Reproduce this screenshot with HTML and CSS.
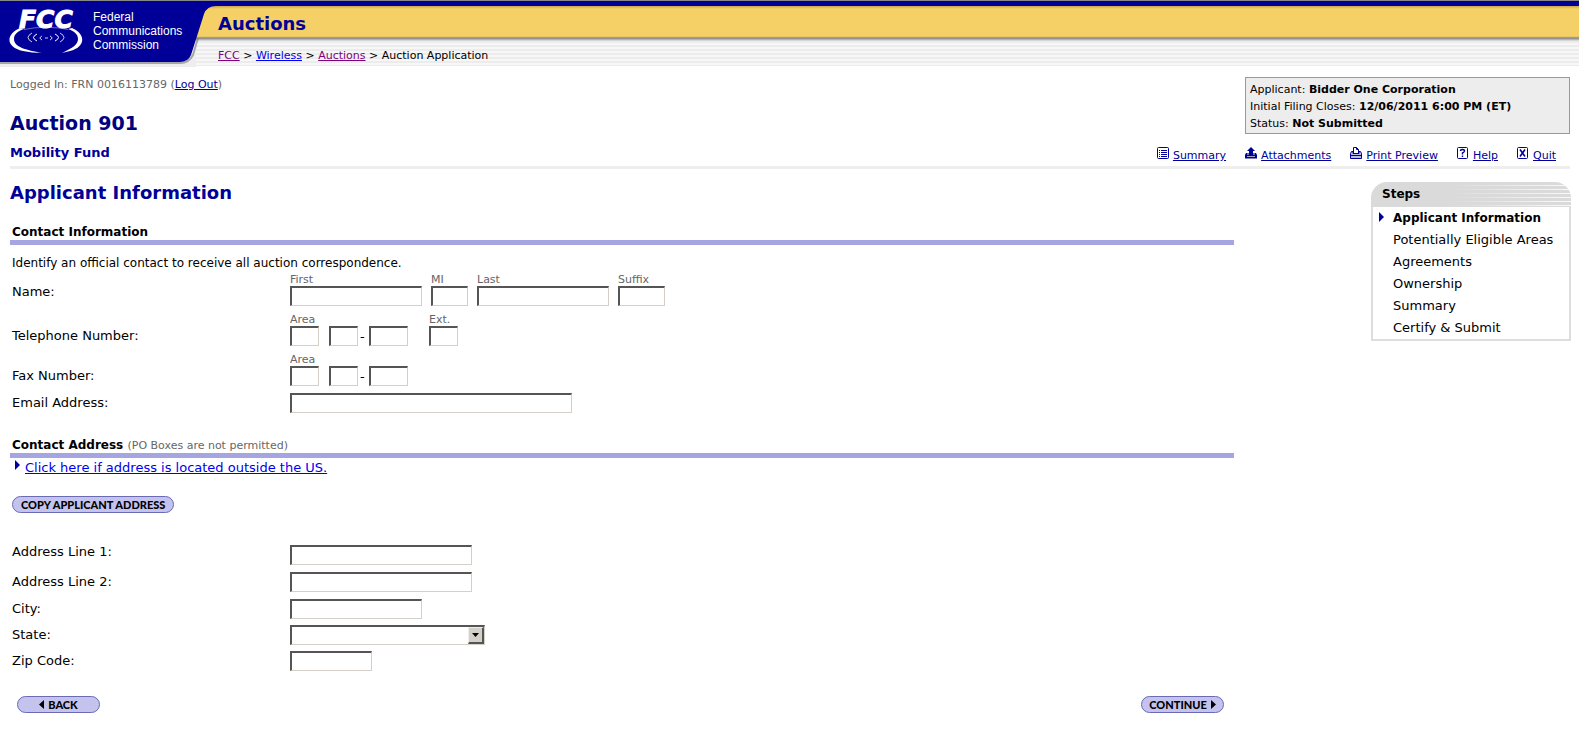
FILE: index.html
```html
<!DOCTYPE html>
<html lang="en">
<head>
    <meta charset="UTF-8">
    <meta name="viewport" content="width=device-width, initial-scale=1.0">
    <title>Auction Application</title>
    <link rel="stylesheet" href="styles.css">
</head>
<body>
    <header class="site-header">
        <div class="logo">
            <svg class="logo-shape" width="216" height="66" viewBox="0 0 216 66" aria-hidden="true">
                <path d="M0 66 V61 H180 Q189 61 192 53 L196 38 V66 Z" fill="#eeeeee"/>
                <path d="M0 62 H180 Q189 62 193 54 L198 37" fill="none" stroke="#777" stroke-width="2" opacity="0.6"/>
                <path d="M0 0 H216 V5 Q207 5 204 13 L191 54 Q188 61 180 61 H0 Z" fill="#000099"/>
                <text class="logo-fcc" x="19" y="27">FCC</text>
                <g fill="#fff">
                    <path d="M20 27 C6 33 5 46 23 50 Q32 52 42 52 C26 49 14 46 14 38 C14 33 18 30 24 28 Z"/>
                    <path d="M72 27 C86 33 86 46 70 50 Q66 51 62 52 C72 47 78 44 78 38 C78 33 74 30 68 28 Z"/>
                </g>
                <g fill="none" stroke="#fff">
                    <path d="M24 28.5 Q46 24 68 28.5" opacity="0.4"/>
                    <path d="M32 32 Q24 36.5 32 41" opacity="0.8"/>
                    <path d="M37 33 Q30 36.5 37 40"/>
                    <path d="M60 32 Q68 36.5 60 41" opacity="0.8"/>
                    <path d="M55 33 Q62 36.5 55 40"/>
                    <path d="M42 35 Q38 37 42 39M50 35Q54 37 50 39M45 37h3" opacity="0.8"/>
                </g>
            </svg>
            <div class="logo-name">Federal<br>Communications<br>Commission</div>
        </div>
        <div class="site-title">Auctions</div>
        <nav class="breadcrumbs">
            <a class="visited" href="#">FCC</a> &gt; <a href="#">Wireless</a> &gt; <a class="visited" href="#">Auctions</a> &gt; Auction Application
        </nav>
    </header>

    <div class="page">
        <div class="top">
            <div class="top-left">
                <div class="login">Logged In: FRN 0016113789 (<a href="#">Log Out</a>)</div>
                <h1>Auction 901</h1>
                <h2>Mobility Fund</h2>
            </div>
            <div class="top-right">
                <div class="status-box">
                    Applicant: <b>Bidder One Corporation</b><br>
                    Initial Filing Closes: <b>12/06/2011 6:00 PM (ET)</b><br>
                    Status: <b>Not Submitted</b>
                </div>
                <nav class="tools">
                    <a href="#">
                        <svg width="12" height="12" viewBox="0 0 12 12"><rect x="0.5" y="0.5" width="11" height="11" rx="1" fill="#fff" stroke="#000099"/><path d="M2 3.5h1M4 3.5h6M2 5.5h1M4 5.5h6M2 7.5h1M4 7.5h6M2 9.5h1M4 9.5h6" stroke="#000099"/></svg>
                        <span>Summary</span>
                    </a>
                    <a href="#">
                        <svg width="12" height="12" viewBox="0 0 12 12"><path d="M1 6h10l1 2v3.5h-12V8z" fill="#000099"/><path d="M2 9.5h8" stroke="#aab"/><path d="M2 7h8" stroke="#dde"/><path d="M6 0l4 4H8v4H4V4H2z" fill="#000099"/></svg>
                        <span>Attachments</span>
                    </a>
                    <a href="#">
                        <svg width="12" height="12" viewBox="0 0 12 12"><path d="M3.5 7V0.5h3l2 2V7" fill="#fff" stroke="#000099"/><path d="M6.5 0.5v2h2" fill="none" stroke="#000099"/><path d="M3 4.5H1.5l-1 2v5h11v-5l-1-2H9v2H3z" fill="#bbd" stroke="#000099"/><path d="M1 8.5h10" stroke="#000099"/></svg>
                        <span>Print Preview</span>
                    </a>
                    <a href="#">
                        <svg width="12" height="12" viewBox="0 0 12 12"><rect x="0.5" y="0.5" width="10" height="11" rx="1" fill="#fff" stroke="#000099"/><path d="M3.5 4Q3.5 2.5 5.5 2.5T7.5 4Q7.5 5 5.5 6V7.5M5.5 8.5v1.5" fill="none" stroke="#000099" stroke-width="1.4"/></svg>
                        <span>Help</span>
                    </a>
                    <a href="#">
                        <svg width="12" height="12" viewBox="0 0 12 12"><rect x="0.5" y="0.5" width="10" height="11" rx="1" fill="#fff" stroke="#000099"/><path d="M3 2.5l5 7M8 2.5l-5 7" stroke="#000099" stroke-width="1.6"/></svg>
                        <span>Quit</span>
                    </a>
                </nav>
            </div>
        </div>

        <div class="columns">
            <form class="content">
                <h3>Applicant Information</h3>

                <h4>Contact Information</h4>
                <p class="intro">Identify an official contact to receive all auction correspondence.</p>

                <div class="row">
                    <span class="label name-label">Name:</span>
                    <div class="fields">
                        <label class="field">First<input class="w-name" type="text"></label>
                        <label class="field">MI<input class="w-mi" type="text"></label>
                        <label class="field">Last<input class="w-name" type="text"></label>
                        <label class="field">Suffix<input class="w-suffix" type="text"></label>
                    </div>
                </div>
                <div class="row">
                    <span class="label">Telephone Number:</span>
                    <div class="fields phone">
                        <label class="field">Area<input class="w-code" type="text"></label>
                        <input class="w-code prefix" type="text" aria-label="Telephone prefix">
                        <span class="dash">-</span>
                        <input class="w-line" type="text" aria-label="Telephone line number">
                        <label class="field ext">Ext.<input class="w-code" type="text"></label>
                    </div>
                </div>
                <div class="row">
                    <span class="label">Fax Number:</span>
                    <div class="fields phone">
                        <label class="field">Area<input class="w-code" type="text"></label>
                        <input class="w-code prefix" type="text" aria-label="Fax prefix">
                        <span class="dash">-</span>
                        <input class="w-line" type="text" aria-label="Fax line number">
                    </div>
                </div>
                <div class="row">
                    <label class="label" for="email">Email Address:</label>
                    <input class="w-email" type="text" id="email">
                </div>

                <h4 class="address-title">Contact Address <small>(PO Boxes are not permitted)</small></h4>
                <div class="outside">
                    <svg width="5" height="10" viewBox="0 0 5 10"><path d="M0 0l5 5-5 5z" fill="#000099"/></svg>
                    <a href="#">Click here if address is located outside the US.</a>
                </div>

                <button class="btn copy" type="button">COPY APPLICANT ADDRESS</button>

                <div class="row first-line">
                    <label class="label" for="address1">Address Line 1:</label>
                    <input class="w-address" type="text" id="address1">
                </div>
                <div class="row">
                    <label class="label" for="address2">Address Line 2:</label>
                    <input class="w-address" type="text" id="address2">
                </div>
                <div class="row">
                    <label class="label" for="city">City:</label>
                    <input class="w-name" type="text" id="city">
                </div>
                <div class="row tight">
                    <label class="label" for="state">State:</label>
                    <div class="select-wrap">
                        <select id="state"><option></option></select>
                        <span class="arrow"><svg width="7" height="4" viewBox="0 0 7 4"><path d="M0 0h7L3.5 4z"/></svg></span>
                    </div>
                </div>
                <div class="row tight">
                    <label class="label" for="zip">Zip Code:</label>
                    <input class="w-zip" type="text" id="zip">
                </div>

                <div class="actions">
                    <button class="btn nav" type="button"><svg width="5" height="9" viewBox="0 0 5 9"><path d="M5 0v9L0 4.5z"/></svg>BACK</button>
                    <button class="btn nav" type="submit">CONTINUE<svg width="5" height="9" viewBox="0 0 5 9"><path d="M0 0v9l5-4.5z"/></svg></button>
                </div>
            </form>

            <aside class="steps">
                <div class="steps-head">Steps</div>
                <ul>
                    <li class="current">Applicant Information</li>
                    <li>Potentially Eligible Areas</li>
                    <li>Agreements</li>
                    <li>Ownership</li>
                    <li>Summary</li>
                    <li>Certify &amp; Submit</li>
                </ul>
            </aside>
        </div>
    </div>
</body>
</html>
```
FILE: styles.css
```css
* {
    box-sizing: border-box;
}
body {
    margin: 0;
    background: #fff;
    color: #000;
    font-family: "DejaVu Sans", Verdana, sans-serif;
    font-size: 13px;
}
h1, h2, h3, h4, p, ul {
    margin: 0;
    padding: 0;
}
a {
    color: #0000ee;
}
svg {
    display: block;
    flex: none;
}

/* header */
.site-header {
    display: grid;
    grid-template-columns: 218px 1fr;
    grid-template-rows: 36px 29px;
    border-top: 1px solid #888;
    background:
        linear-gradient(#000099 5px, #c9a650 5px, #f4d067 8px, #f4d067 35px, #d9ba62 36px, #808080 37px, #e8e8e8 40px, transparent 40px) 0 0 / 100% 41px no-repeat,
        repeating-linear-gradient(#ececec 0 2px, #f7f7f7 2px 4px);
}
.logo {
    grid-row: 1 / 3;
    display: grid;
}
.logo-shape, .logo-name {
    grid-area: 1 / 1;
}
.logo-fcc {
    font: italic bold 25px "DejaVu Sans", sans-serif;
    fill: #fff;
    stroke: #fff;
    stroke-width: 1px;
}
.logo-name {
    padding: 9px 0 0 93px;
    color: #fff;
    font-family: "Liberation Sans", Arial, sans-serif;
    font-size: 12px;
    line-height: 14px;
}
.site-title {
    padding-top: 5px;
    color: #000099;
    font-size: 18px;
    font-weight: bold;
    line-height: 36px;
}
.breadcrumbs {
    padding-top: 6px;
    font-size: 11px;
    line-height: 26px;
}
.breadcrumbs .visited {
    color: #800080;
}

/* top area */
.page {
    padding: 0 9px 0 10px;
}
.top {
    display: flex;
    justify-content: space-between;
    padding-bottom: 3px;
    border-bottom: 3px solid #eee;
}
.login {
    padding-top: 11px;
    color: #666;
    font-size: 11px;
    line-height: 16px;
}
.login a, .tools a {
    color: #000099;
}
h1, h2, h3 {
    color: #000099;
}
h1 {
    margin-top: 17px;
    color: #000080;
    font-size: 19px;
    line-height: 26px;
}
h2 {
    margin-top: 8px;
    font-size: 13px;
    line-height: 18px;
}
.status-box {
    width: 325px;
    margin: 11px 0 0 auto;
    padding: 3px 4px 1px;
    border: 1px solid #999;
    background: #ededed;
    font-size: 11px;
    line-height: 17px;
}
.tools {
    display: flex;
    justify-content: flex-end;
    gap: 19px;
    padding: 13px 14px 0 0;
    font-size: 11px;
    line-height: 14px;
}
.tools a {
    display: flex;
    gap: 4px;
    text-decoration: none;
}
.tools span {
    padding-top: 2px;
    text-decoration: underline;
}

/* form */
.columns {
    display: flex;
    align-items: flex-start;
    gap: 137px;
    margin-right: -1px;
}
.content {
    flex: 1;
}
h3 {
    margin-top: 12px;
    font-size: 18px;
    line-height: 24px;
}
h4 {
    margin-top: 17px;
    padding: 3px 2px 0;
    border-bottom: 5px solid #a5a5e1;
    font-size: 12px;
    line-height: 15px;
}
h4 small {
    color: #666;
    font-size: 11px;
    font-weight: normal;
}
.intro {
    padding: 8px 2px 0;
    font-size: 12px;
    line-height: 20px;
}
.row {
    display: grid;
    grid-template-columns: 278px 1fr;
    align-items: end;
    margin: 0 0 7px 2px;
}
.label {
    line-height: 20px;
}
.name-label {
    padding-bottom: 4px;
}
.first-line {
    align-items: start;
}
.first-line .label {
    line-height: 14px;
}
.fields {
    display: flex;
    align-items: flex-end;
    gap: 9px;
}
.phone {
    gap: 0;
}
.field {
    display: block;
    color: #666;
    font-size: 11px;
    line-height: 13px;
}
input, select {
    display: block;
    height: 20px;
    margin: 0;
    padding: 0 2px;
    border: 1px solid #d4d0c8;
    border-top: 2px solid #555;
    border-left: 2px solid #555;
    border-radius: 0;
    background: #fff;
    font: inherit;
}
.w-name {
    width: 132px;
}
.w-mi {
    width: 37px;
}
.w-suffix {
    width: 47px;
}
.w-code {
    width: 29px;
}
.w-line {
    width: 39px;
}
.w-email {
    width: 282px;
}
.w-address {
    width: 182px;
}
.w-zip {
    width: 82px;
}
.prefix {
    margin-left: 10px;
}
.dash {
    width: 11px;
    padding-left: 2px;
    line-height: 18px;
}
.ext {
    margin-left: 21px;
}
.address-title {
    margin-top: 22px;
}
.outside {
    display: flex;
    gap: 5px;
    padding: 2px 0 0 5px;
    line-height: 16px;
}
.btn {
    display: flex;
    align-items: center;
    justify-content: center;
    height: 17px;
    padding: 0 8px;
    border: 1px solid #6a6ab5;
    border-radius: 9px;
    background: #c3c3ee;
    color: #000;
    font-family: Lato, sans-serif;
    font-size: 11px;
    font-weight: 900;
    line-height: 14px;
    cursor: pointer;
}
.copy {
    margin: 20px 0 32px 2px;
}
.select-wrap {
    position: relative;
    width: 195px;
}
select {
    width: 100%;
    appearance: none;
}
.arrow {
    position: absolute;
    top: 2px;
    right: 1px;
    display: grid;
    place-items: center;
    width: 16px;
    height: 17px;
    border: 1px solid #eee;
    border-right: 2px solid #555;
    border-bottom: 2px solid #555;
    background: #d4d0c8;
    pointer-events: none;
}
.tight {
    margin-top: -1px;
}
.actions {
    display: flex;
    justify-content: space-between;
    padding: 18px 10px 0 7px;
}
.nav {
    gap: 4px;
    width: 83px;
}

/* steps */
.steps {
    width: 200px;
    margin-top: 13px;
}
.steps-head {
    height: 25px;
    padding-left: 11px;
    border-radius: 16px 16px 0 0;
    background:
        linear-gradient(to right, #dadada 40%, transparent),
        repeating-linear-gradient(#dadada 0 3px, #fafafa 3px 4px);
    font-size: 12px;
    font-weight: bold;
    line-height: 24px;
}
.steps ul {
    border: 2px solid #ddd;
    border-top: 0;
    list-style: none;
}
.steps li {
    padding-left: 20px;
    line-height: 22px;
}
.steps .current {
    padding-left: 6px;
    font-size: 12px;
    font-weight: bold;
}
.steps .current::before {
    content: "";
    display: inline-block;
    margin-right: 9px;
    border: 5px solid transparent;
    border-right: 0;
    border-left-color: #000099;
}
```
